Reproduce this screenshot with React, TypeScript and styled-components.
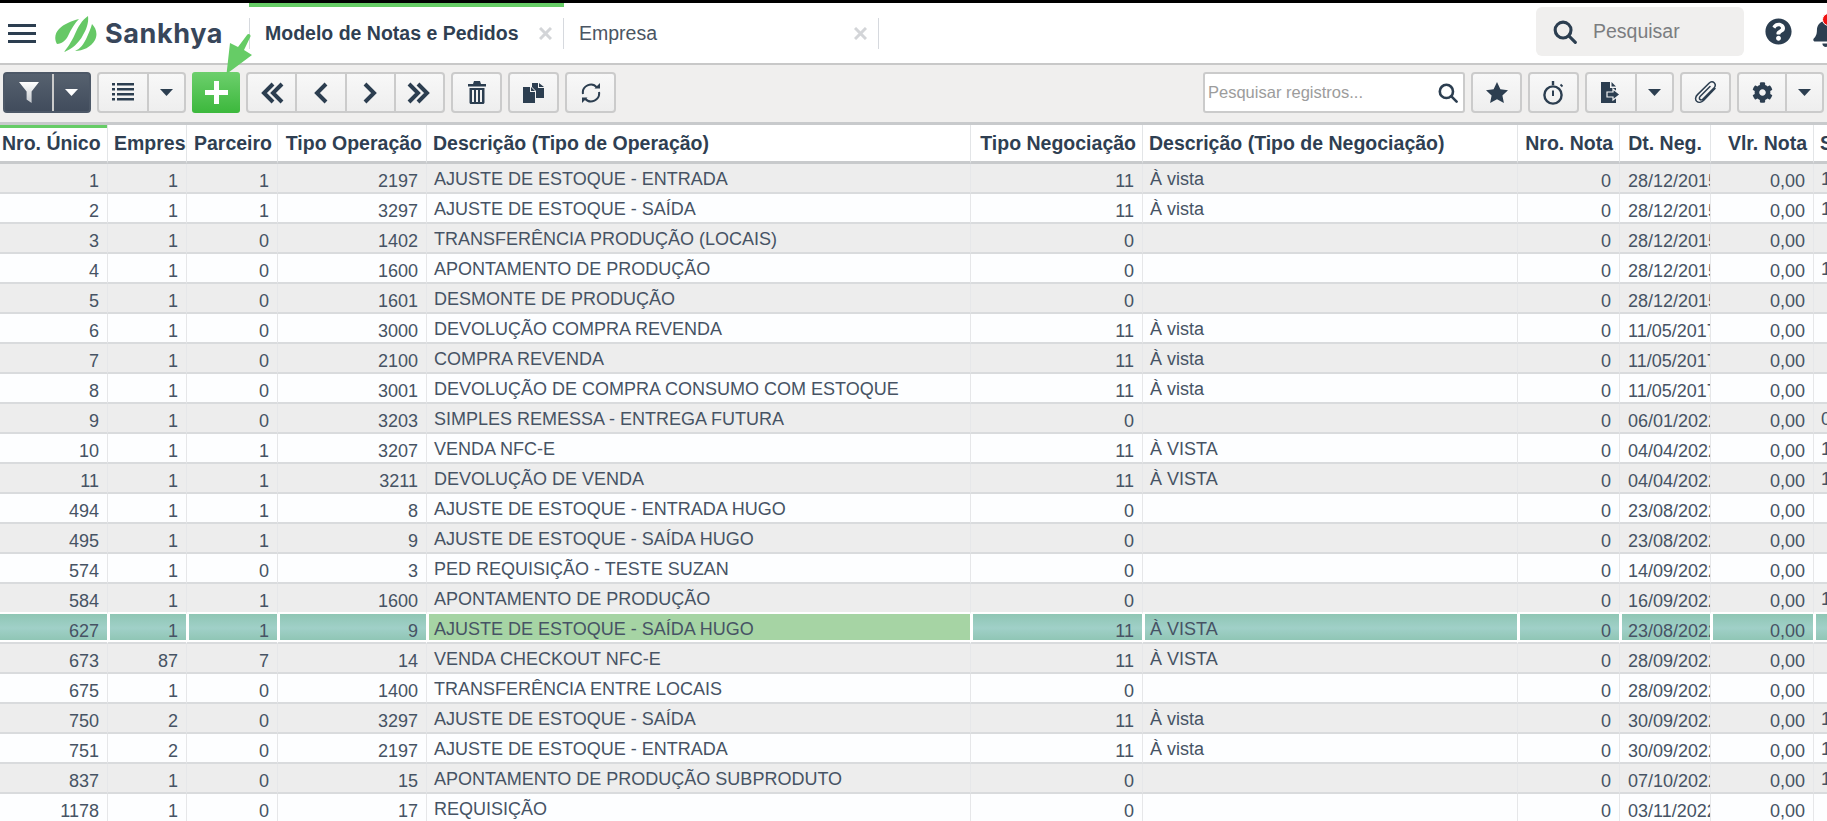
import React from 'react';
import styled, { createGlobalStyle } from 'styled-components';
import { FaBell, FaCog, FaQuestionCircle } from 'react-icons/fa';

const INK = '#2c3e50';

const GlobalStyle = createGlobalStyle`
  html, body {
    margin: 0;
    padding: 0;
    background: #fff;
    overflow: hidden;
  }
  * {
    box-sizing: border-box;
  }
`;

const Page = styled.div`
  width: 1827px;
  height: 821px;
  overflow: hidden;
  position: relative;
  background: #fff;
  border-top: 3px solid #000;
  font-family: 'Liberation Sans', Arial, sans-serif;
  color: ${INK};
`;

const Header = styled.header`
  height: 62px;
  display: flex;
  align-items: center;
  background: #fff;
  border-bottom: 2px solid #c8c8c8;
`;

const MenuButton = styled.div`
  width: 28px;
  height: 19px;
  margin: 0 19px 0 8px;
  display: flex;
  flex-direction: column;
  justify-content: space-between;

  span {
    display: block;
    height: 3px;
    background: ${INK};
  }
`;

const Brand = styled.div`
  display: flex;
  align-items: center;
  width: 194px;
  gap: 8px;
`;

const BrandName = styled.span`
  font-family: Inter, sans-serif;
  font-weight: 700;
  font-size: 27px;
  letter-spacing: 0.6px;
  color: #38465a;
`;

const TabStrip = styled.div`
  display: flex;
  height: 100%;
`;

const Tab = styled.div<{ $active?: boolean }>`
  width: 315px;
  height: 100%;
  display: flex;
  align-items: center;
  padding-bottom: 4px;
  border-top: 4px solid ${p => (p.$active ? '#66cc66' : 'transparent')};
`;

const TabBody = styled.div<{ $first?: boolean }>`
  width: 100%;
  height: 31px;
  display: flex;
  align-items: center;
  justify-content: space-between;
  padding: 0 11px 0 15px;
  border-right: 1px solid #d6d9de;
  border-left: ${p => (p.$first ? '1px solid #d6d9de' : 'none')};
`;

const TabTitle = styled.span<{ $active?: boolean }>`
  font-size: 19.5px;
  font-weight: ${p => (p.$active ? 700 : 400)};
  color: ${p => (p.$active ? '#2f3f52' : '#4a5563')};
`;

const TabClose = styled.svg`
  width: 13px;
  height: 13px;
  stroke: #d3d5d8;
  stroke-width: 3;
`;

const HeaderRight = styled.div`
  margin-left: auto;
  display: flex;
  align-items: center;
  padding-bottom: 3px;
`;

const GlobalSearch = styled.div`
  width: 208px;
  height: 49px;
  border-radius: 6px;
  background: #f0efee;
  display: flex;
  align-items: center;
  gap: 16px;
  padding-left: 17px;
  margin-right: 21px;
`;

const GlobalSearchText = styled.span`
  font-size: 19.5px;
  color: #7b7d80;
`;

const HelpIcon = styled(FaQuestionCircle)`
  width: 27px;
  height: 27px;
  color: ${INK};
  margin-right: 21px;
`;

const BellWrap = styled.div`
  position: relative;
  width: 14px;
  height: 27px;
`;

const BellIcon = styled(FaBell)`
  width: 26px;
  height: 29px;
  color: ${INK};
`;

const BellBadge = styled.span`
  position: absolute;
  left: 9px;
  top: -5px;
  width: 13px;
  height: 13px;
  border-radius: 50%;
  background: #f01010;
  border: 1px solid #fff;
`;

const Toolbar = styled.div`
  height: 60px;
  display: flex;
  align-items: center;
  gap: 6px;
  padding: 0 3px 2px;
  background: #f0efee;
  border-bottom: 3px solid #c8cacc;
`;

const ToolbarSpacer = styled.div`
  flex: 1;
`;

const ButtonGroup = styled.div<{ $w: number; $dark?: boolean }>`
  width: ${p => p.$w}px;
  height: 41px;
  display: flex;
  flex: none;
  border-radius: 4px;
  overflow: hidden;
  border: 2px solid ${p => (p.$dark ? '#4d5867' : '#cbcbcb')};
  background: ${p => (p.$dark ? 'linear-gradient(#56616f, #414c5c)' : 'linear-gradient(#f8f8f8, #eeeeee)')};
`;

const ToolButton = styled.div<{ $dark?: boolean }>`
  flex: 1;
  display: flex;
  align-items: center;
  justify-content: center;
  color: ${p => (p.$dark ? '#fff' : INK)};
  & + & {
    border-left: 2px solid ${p => (p.$dark ? '#4a5564' : '#cbcbcb')};
  }
`;

const CaretButton = styled(ToolButton)`
  flex: none;
  width: 37px;
`;

const AddButton = styled.div`
  width: 48px;
  height: 41px;
  flex: none;
  border-radius: 3px;
  display: flex;
  align-items: center;
  justify-content: center;
  background: linear-gradient(#6dcf6d, #3cb83c);
`;

const SearchBox = styled.div`
  width: 262px;
  height: 41px;
  flex: none;
  display: flex;
  align-items: center;
  padding: 0 5px 0 3px;
  background: #fff;
  border: 2px solid #cbcbcb;
  border-radius: 3px;
`;

const SearchInput = styled.input`
  flex: 1;
  min-width: 0;
  border: 0;
  outline: 0;
  padding: 0;
  background: transparent;
  font-family: 'Liberation Sans', Arial, sans-serif;
  font-size: 16.5px;
  &::placeholder {
    color: #9c9c9c;
    opacity: 1;
  }
`;

const Arrow = styled.svg`
  position: absolute;
  left: 222px;
  top: 27px;
  width: 34px;
  height: 44px;
`;

const GridWrap = styled.div`
  overflow: hidden;
  position: relative;
`;

const GridTable = styled.table`
  width: 1875px;
  table-layout: fixed;
  border-collapse: separate;
  border-spacing: 0;
`;

const HeadCell = styled.th<{ $align?: string; $pad?: number; $mark?: boolean }>`
  height: 39px;
  padding: 0 ${p => p.$pad ?? 6}px 0 ${p => (p.$align === 'right' ? 2 : 6)}px;
  background: #fff;
  border-right: 1px solid #e3e5e7;
  border-bottom: 3px solid #c8cacc;
  box-shadow: ${p => (p.$mark ? 'inset 0 3px 0 #66cc66' : 'none')};
  text-align: ${p => p.$align || 'left'};
  font-size: 19.5px;
  font-weight: 700;
  color: #2f3f52;
  white-space: nowrap;
  overflow: hidden;
`;

const Cell = styled.td<{
  $right?: boolean;
  $top?: boolean;
  $even: boolean;
  $selected: boolean;
  $beforeSelected: boolean;
  $accent?: boolean;
}>`
  height: 30px;
  padding: ${p => (p.$top ? '2px 8px 0 7px' : '7px 8px 0 8px')};
  border-bottom: 2px solid ${p => (p.$beforeSelected ? '#fff' : '#d9dbdd')};
  border-right: 1px solid ${p => (p.$selected ? '#fff' : '#e6e7e9')};
  text-align: ${p => (p.$right ? 'right' : 'left')};
  font-size: 18px;
  color: #465364;
  white-space: nowrap;
  overflow: hidden;
  background: ${p =>
    p.$selected
      ? p.$accent
        ? '#a6d4a4'
        : 'linear-gradient(#8fc6b4, #a0d0c8 50%, #8dc4b2)'
      : p.$even
        ? '#fdfeff'
        : '#ededed'};
  box-shadow: ${p => (p.$selected ? 'inset 0 -2px 0 #fff, inset 2px 0 0 #fff' : 'none')};

  &:first-child {
    box-shadow: ${p => (p.$selected ? 'inset 0 -2px 0 #fff' : 'none')};
  }
`;

type Row = [number, number, number, number, string, number, string, string, string];

const rows: Row[] = [
  [1, 1, 1, 2197, 'AJUSTE DE ESTOQUE - ENTRADA', 11, 'À vista', '28/12/2015', '1'],
  [2, 1, 1, 3297, 'AJUSTE DE ESTOQUE - SAÍDA', 11, 'À vista', '28/12/2015', '1'],
  [3, 1, 0, 1402, 'TRANSFERÊNCIA PRODUÇÃO (LOCAIS)', 0, '', '28/12/2015', ''],
  [4, 1, 0, 1600, 'APONTAMENTO DE PRODUÇÃO', 0, '', '28/12/2015', '1'],
  [5, 1, 0, 1601, 'DESMONTE DE PRODUÇÃO', 0, '', '28/12/2015', ''],
  [6, 1, 0, 3000, 'DEVOLUÇÃO COMPRA REVENDA', 11, 'À vista', '11/05/2017', ''],
  [7, 1, 0, 2100, 'COMPRA REVENDA', 11, 'À vista', '11/05/2017', ''],
  [8, 1, 0, 3001, 'DEVOLUÇÃO DE COMPRA CONSUMO COM ESTOQUE', 11, 'À vista', '11/05/2017', ''],
  [9, 1, 0, 3203, 'SIMPLES REMESSA - ENTREGA FUTURA', 0, '', '06/01/2022', '0'],
  [10, 1, 1, 3207, 'VENDA NFC-E', 11, 'À VISTA', '04/04/2022', '1'],
  [11, 1, 1, 3211, 'DEVOLUÇÃO DE VENDA', 11, 'À VISTA', '04/04/2022', '1'],
  [494, 1, 1, 8, 'AJUSTE DE ESTOQUE - ENTRADA HUGO', 0, '', '23/08/2022', ''],
  [495, 1, 1, 9, 'AJUSTE DE ESTOQUE - SAÍDA HUGO', 0, '', '23/08/2022', ''],
  [574, 1, 0, 3, 'PED REQUISIÇÃO - TESTE SUZAN', 0, '', '14/09/2022', ''],
  [584, 1, 1, 1600, 'APONTAMENTO DE PRODUÇÃO', 0, '', '16/09/2022', '1'],
  [627, 1, 1, 9, 'AJUSTE DE ESTOQUE - SAÍDA HUGO', 11, 'À VISTA', '23/08/2022', ''],
  [673, 87, 7, 14, 'VENDA CHECKOUT NFC-E', 11, 'À VISTA', '28/09/2022', ''],
  [675, 1, 0, 1400, 'TRANSFERÊNCIA ENTRE LOCAIS', 0, '', '28/09/2022', ''],
  [750, 2, 0, 3297, 'AJUSTE DE ESTOQUE - SAÍDA', 11, 'À vista', '30/09/2022', '1'],
  [751, 2, 0, 2197, 'AJUSTE DE ESTOQUE - ENTRADA', 11, 'À vista', '30/09/2022', '1'],
  [837, 1, 0, 15, 'APONTAMENTO DE PRODUÇÃO SUBPRODUTO', 0, '', '07/10/2022', '1'],
  [1178, 1, 0, 17, 'REQUISIÇÃO', 0, '', '03/11/2022', ''],
];

const columns = [
  { title: 'Nro. Único', width: 108, align: 'right', pad: 8 },
  { title: 'Empresa', width: 79 },
  { title: 'Parceiro', width: 91, align: 'right', pad: 5 },
  { title: 'Tipo Operação', width: 149, align: 'right', pad: 4 },
  { title: 'Descrição (Tipo de Operação)', width: 544 },
  { title: 'Tipo Negociação', width: 172, align: 'right' },
  { title: 'Descrição (Tipo de Negociação)', width: 375 },
  { title: 'Nro. Nota', width: 102, align: 'right' },
  { title: 'Dt. Neg.', width: 91, align: 'center' },
  { title: 'Vlr. Nota', width: 103, align: 'right' },
  { title: 'Status', width: 61 },
];

const Caret = ({ color = INK }: { color?: string }) => (
  <svg width="13" height="7" viewBox="0 0 13 7">
    <path d="M0 0h13L6.5 7z" fill={color} />
  </svg>
);

const Search = ({ size }: { size: number }) => (
  <svg width={size} height={size} viewBox="0 0 20 20" fill="none" stroke={INK} strokeWidth="2.6" strokeLinecap="round">
    <circle cx="8.4" cy="8.4" r="6.6" />
    <path d="M13.4 13.4L18.6 18.6" />
  </svg>
);

const Chevrons = ({ dir, count }: { dir: 'left' | 'right'; count: 1 | 2 }) => (
  <svg
    width={count === 2 ? 24 : 16}
    height="22"
    viewBox={count === 2 ? '0 0 24 22' : '0 0 16 22'}
    fill="none"
    stroke={INK}
    strokeWidth="4"
    style={{ transform: dir === 'right' ? 'scaleX(-1)' : undefined }}
  >
    <path d="M13 2L4 11l9 9" />
    {count === 2 && <path d="M22 2l-9 9 9 9" />}
  </svg>
);

export default function App() {
  return (
    <Page>
      <GlobalStyle />
      <Header>
        <MenuButton>
          <span />
          <span />
          <span />
        </MenuButton>
        <Brand>
          <svg width="42" height="37" viewBox="0 0 42 37" fill="#66c866">
            <path d="M2 29C-1 24 0 18 4 14 9 9 16 6 24 4 20 8 16 14 13 21 11 25 7 29 2 29z" />
            <path d="M9 37C12 33 16 28 20 19 23 12 27 5 33 1 34 8 31 15 28 20 24 28 17 34 9 37z" />
            <path d="M20 36C25 34 29 29 32 22 34 17 36 13 37 9 41 13 43 19 40 25 36 32 28 36 20 36z" />
          </svg>
          <BrandName>Sankhya</BrandName>
        </Brand>
        <TabStrip>
          <Tab $active>
            <TabBody $first>
              <TabTitle $active>Modelo de Notas e Pedidos</TabTitle>
              <TabClose viewBox="0 0 13 13">
                <path d="M1 1l11 11M12 1L1 12" />
              </TabClose>
            </TabBody>
          </Tab>
          <Tab>
            <TabBody>
              <TabTitle>Empresa</TabTitle>
              <TabClose viewBox="0 0 13 13">
                <path d="M1 1l11 11M12 1L1 12" />
              </TabClose>
            </TabBody>
          </Tab>
        </TabStrip>
        <HeaderRight>
          <GlobalSearch>
            <Search size={24} />
            <GlobalSearchText>Pesquisar</GlobalSearchText>
          </GlobalSearch>
          <HelpIcon />
          <BellWrap>
            <BellIcon />
            <BellBadge />
          </BellWrap>
        </HeaderRight>
      </Header>

      <Toolbar>
        <ButtonGroup $w={88} $dark>
          <ToolButton $dark>
            <svg width="20" height="21" viewBox="0 0 20 21">
              <defs>
                <linearGradient id="funnel" x1="0" y1="0" x2="0" y2="1">
                  <stop offset="0" stopColor="#ffffff" />
                  <stop offset="1" stopColor="#c4c8cd" />
                </linearGradient>
              </defs>
              <path d="M0 0h20l-7.4 9.500V21l-5-3.500V9.500z" fill="url(#funnel)" />
            </svg>
          </ToolButton>
          <CaretButton $dark>
            <Caret color="#fff" />
          </CaretButton>
        </ButtonGroup>
        <ButtonGroup $w={89}>
          <ToolButton>
            <svg width="22" height="21" viewBox="0 0 22 21" fill={INK}>
              <path d="M0 1h3v2.400H0zM5 1h17v2.400H5zM0 6h3v2.400H0zM5 6h17v2.400H5zM0 11h3v2.400H0zM5 11h17v2.400H5zM0 16h3v2.400H0zM5 16h17v2.400H5z" />
            </svg>
          </ToolButton>
          <CaretButton>
            <Caret />
          </CaretButton>
        </ButtonGroup>
        <AddButton>
          <svg width="23" height="23" viewBox="0 0 23 23" fill="#fff">
            <path d="M9 0h5v9h9v5h-9v9H9v-9H0V9h9z" />
          </svg>
        </AddButton>
        <ButtonGroup $w={199}>
          <ToolButton>
            <Chevrons dir="left" count={2} />
          </ToolButton>
          <ToolButton>
            <Chevrons dir="left" count={1} />
          </ToolButton>
          <ToolButton>
            <Chevrons dir="right" count={1} />
          </ToolButton>
          <ToolButton>
            <Chevrons dir="right" count={2} />
          </ToolButton>
        </ButtonGroup>
        <ButtonGroup $w={51}>
          <ToolButton>
            <svg width="18" height="23" viewBox="0 0 18 23" fill={INK}>
              <path d="M6 0h6l1 3h5v2.400H0V3h5zM1.500 7h15v14.500c0 .8-.7 1.500-1.500 1.500H3c-.8 0-1.500-.7-1.500-1.500zm2.500 2v12h2V9zm4 0v12h2V9zm4 0v12h2V9z" fillRule="evenodd" />
            </svg>
          </ToolButton>
        </ButtonGroup>
        <ButtonGroup $w={51}>
          <ToolButton>
            <svg width="21" height="20" viewBox="0 0 21 20" fill={INK}>
              <path d="M0 4h7v5h5v11H0zM8 4l4 4H8z" />
              <path d="M9 0h6v5h6v10h-8V8L9 4zM16 0l5 4h-5z" />
            </svg>
          </ToolButton>
        </ButtonGroup>
        <ButtonGroup $w={51}>
          <ToolButton>
            <svg width="22" height="22" viewBox="0 0 22 22" fill="none" stroke={INK} strokeWidth="2">
              <path d="M3 12A8 8 0 0 1 17 5.500" />
              <path d="M19 10A8 8 0 0 1 5 16.500" />
              <path d="M14.500 6.500h5.500V1z" fill={INK} stroke="none" />
              <path d="M7.500 15.500H2V21z" fill={INK} stroke="none" />
            </svg>
          </ToolButton>
        </ButtonGroup>

        <ToolbarSpacer />

        <SearchBox>
          <SearchInput placeholder="Pesquisar registros..." />
          <Search size={20} />
        </SearchBox>
        <ButtonGroup $w={51}>
          <ToolButton>
            <svg width="22" height="21" viewBox="0 0 22 21" fill={INK}>
              <path d="M11 0l3.400 7.300 7.600.9-5.600 5.200 1.500 7.600L11 17.200 4.100 21l1.500-7.600L0 8.200l7.600-.9z" />
            </svg>
          </ToolButton>
        </ButtonGroup>
        <ButtonGroup $w={51}>
          <ToolButton>
            <svg width="21" height="24" viewBox="0 0 21 24" fill="none" stroke={INK} strokeWidth="2.400">
              <circle cx="10" cy="14" r="8.600" />
              <path d="M10 9.500V15" strokeWidth="2" />
              <path d="M10 0v4" strokeWidth="2.400" />
              <path d="M17.500 3.500l2 2" strokeWidth="1.800" />
            </svg>
          </ToolButton>
        </ButtonGroup>
        <ButtonGroup $w={89}>
          <ToolButton>
            <svg width="20" height="21" viewBox="0 0 20 21" fill={INK}>
              <path d="M0 0h9v6h6v15H0zM10.500 0L15 4.600h-4.500z" />
              <path d="M6 10h6V7l7 5.500-7 5.500v-3H6z" stroke="#f4f4f4" strokeWidth="1.200" />
            </svg>
          </ToolButton>
          <CaretButton>
            <Caret />
          </CaretButton>
        </ButtonGroup>
        <ButtonGroup $w={51}>
          <ToolButton>
            <svg width="24" height="23" viewBox="0 0 24 23" fill="none" stroke={INK} strokeWidth="1.500" strokeLinecap="round">
              <path d="M21 7.500L9.500 19.500c-2 2-5 2.500-6.800.8-1.800-1.800-1.300-4.600.8-6.700L15 2.200c1.600-1.500 3.800-1.700 5.200-.4 1.400 1.400 1.200 3.600-.3 5.200L9 18c-1 1-2.300 1.200-3.100.4-.8-.8-.6-2.100.4-3.100L16 5.500" />
            </svg>
          </ToolButton>
        </ButtonGroup>
        <ButtonGroup $w={87}>
          <ToolButton>
            <FaCog size={21} />
          </ToolButton>
          <CaretButton>
            <Caret />
          </CaretButton>
        </ButtonGroup>
      </Toolbar>

      <GridWrap>
        <GridTable>
          <colgroup>
            {columns.map(c => (
              <col key={c.title} width={c.width} />
            ))}
          </colgroup>
          <thead>
            <tr>
              {columns.map((c, i) => (
                <HeadCell key={c.title} $align={c.align} $pad={c.pad} $mark={i === 0}>
                  {c.title}
                </HeadCell>
              ))}
            </tr>
          </thead>
          <tbody>
            {rows.map((r, i) => {
              const common = {
                $even: i % 2 === 1,
                $selected: r[0] === 627,
                $beforeSelected: rows[i + 1]?.[0] === 627,
              };
              return (
                <tr key={r[0]}>
                  <Cell {...common} $right>{r[0]}</Cell>
                  <Cell {...common} $right>{r[1]}</Cell>
                  <Cell {...common} $right>{r[2]}</Cell>
                  <Cell {...common} $right>{r[3]}</Cell>
                  <Cell {...common} $top $accent>{r[4]}</Cell>
                  <Cell {...common} $right>{r[5]}</Cell>
                  <Cell {...common} $top>{r[6]}</Cell>
                  <Cell {...common} $right>0</Cell>
                  <Cell {...common}>{r[7]}</Cell>
                  <Cell {...common} $right>0,00</Cell>
                  <Cell {...common} $top>{r[8]}</Cell>
                </tr>
              );
            })}
          </tbody>
        </GridTable>
      </GridWrap>

      <Arrow viewBox="0 0 34 44">
        <path d="M25 5c1-2 4-1 3.500 1.500L22 20l8 5L4.500 44 8 13l8 4z" fill="#66cc66" />
      </Arrow>
    </Page>
  );
}
